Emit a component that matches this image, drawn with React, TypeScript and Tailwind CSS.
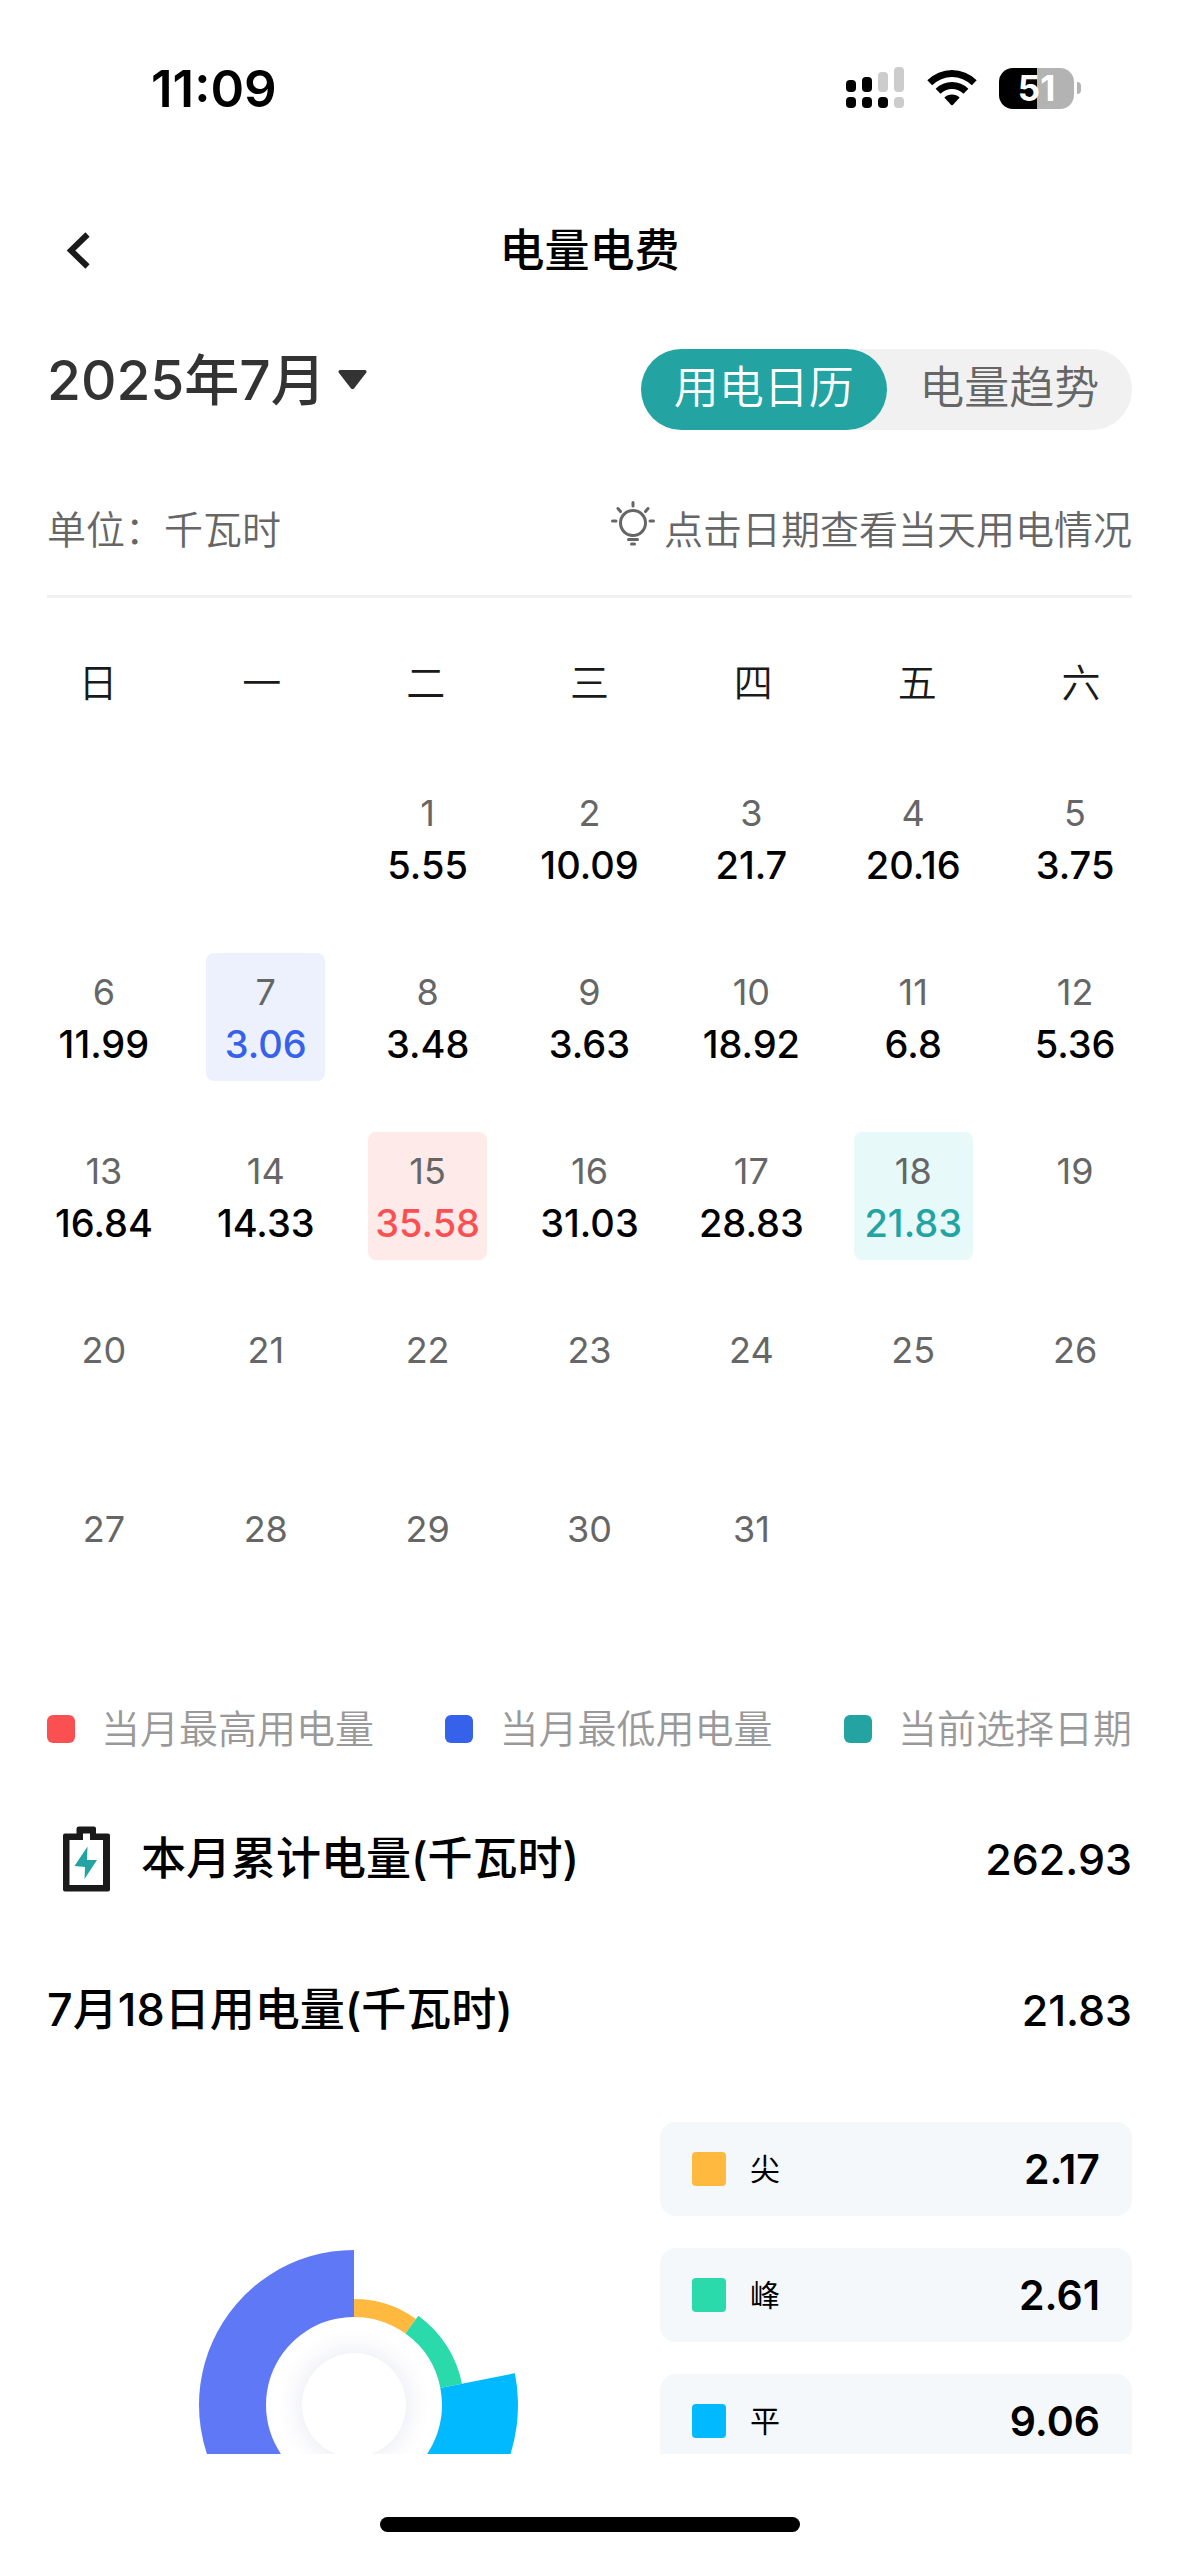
import { useState } from "react";
import clsx from "clsx";

const WEEKDAYS = ["日", "一", "二", "三", "四", "五", "六"];

// July 2025 starts on a Tuesday
const FIRST_WEEKDAY = 2;
const DAYS_IN_MONTH = 31;

const USAGE = [
  "5.55", "10.09", "21.7", "20.16", "3.75",
  "11.99", "3.06", "3.48", "3.63", "18.92", "6.8", "5.36",
  "16.84", "14.33", "35.58", "31.03", "28.83", "21.83",
];

const HIGHEST_DAY = 15;
const LOWEST_DAY = 7;

const LEGEND = [
  { label: "当月最高用电量", dot: "bg-[#fb5052]" },
  { label: "当月最低用电量", dot: "bg-[#3661ea]" },
  { label: "当前选择日期", dot: "bg-[#23a4a2]" },
];

const PERIODS = [
  { label: "尖", value: "2.17", dot: "bg-[#ffb93f]" },
  { label: "峰", value: "2.61", dot: "bg-[#2adaab]" },
  { label: "平", value: "9.06", dot: "bg-[#00b9ff]" },
];

const SLICES = [
  { value: 2.17, outer: 106, color: "#ffb93f" },
  { value: 2.61, outer: 110, color: "#2adaab" },
  { value: 9.06, outer: 164, color: "#00b9ff" },
  { value: 7.99, outer: 155, color: "#5f79f6" },
];

function StatusBar() {
  return (
    <div className="flex h-[176px] shrink-0 items-center justify-between pr-[98px] pl-[151px]">
      <span className="text-[51px] leading-none font-semibold">11:09</span>
      <div className="flex items-center gap-[22px]">
        <svg width="59" height="42" viewBox="0 0 59 42" aria-hidden="true">
          <rect x="0" y="13" width="10" height="12" rx="4" />
          <rect x="16" y="10" width="10" height="15" rx="4" />
          <rect x="32" y="5" width="10" height="20" rx="4" fill="#ccc" />
          <rect x="48" y="0" width="10" height="25" rx="4" fill="#ccc" />
          <rect x="0" y="30" width="10" height="11" rx="4" />
          <rect x="16" y="30" width="10" height="11" rx="4" />
          <rect x="32" y="30" width="10" height="11" rx="4" />
          <rect x="48" y="30" width="10" height="11" rx="4" fill="#ccc" />
        </svg>
        <svg width="50" height="38" viewBox="0 0 50 38" aria-hidden="true">
          <path d="M0.3 11.2A35 35 0 0 1 49.7 11.2L44.8 16.2A28 28 0 0 0 5.2 16.2Z" />
          <path d="M8.6 19.8A23.3 23.3 0 0 1 41.4 19.8L36.5 24.8A16.3 16.3 0 0 0 13.5 24.8Z" />
          <path d="M17.3 28.6A11 11 0 0 1 32.7 28.6L25.8 35.9Q25 36.7 24.2 35.9Z" />
        </svg>
        <div className="flex items-center gap-[3px]">
          <span className="flex h-[41px] w-[75px] items-center justify-center rounded-[14px] bg-linear-to-r from-black from-51% to-[#b3b3b3] to-51% text-[35px] leading-none font-bold text-white">
            51
          </span>
          <span className="h-3 w-1 rounded-r-full bg-[#b3b3b3]" />
        </div>
      </div>
    </div>
  );
}

function NavBar() {
  return (
    <header className="grid h-[148px] shrink-0 grid-cols-3 items-center px-[47px]">
      <button type="button" aria-label="返回" className="justify-self-start p-4">
        <svg width="30" height="40" viewBox="0 0 30 40" fill="none" stroke="#1a1a1a" strokeWidth="6">
          <path d="M24.5 4.5L8 20.5L24.5 36.5" />
        </svg>
      </button>
      <h1 className="text-center text-[45px] leading-none font-medium">电量电费</h1>
    </header>
  );
}

function ViewTabs() {
  const [tab, setTab] = useState("用电日历");
  return (
    <div className="grid h-[81px] w-[491px] grid-cols-2 rounded-full bg-[#f1f1f1]">
      {["用电日历", "电量趋势"].map((name) => (
        <button
          key={name}
          type="button"
          onClick={() => setTab(name)}
          className={clsx(
            "rounded-full pb-1 text-[45px] leading-none font-[350]",
            tab === name ? "bg-[#23a4a2] text-white" : "text-[#666]"
          )}
        >
          {name}
        </button>
      ))}
    </div>
  );
}

function BulbIcon() {
  return (
    <svg width="46" height="46" viewBox="0 0 46 46" fill="none" stroke="#666" strokeWidth="3" strokeLinecap="round" aria-hidden="true">
      <ellipse cx="23" cy="23" rx="12.5" ry="12.5" />
      <path d="M23 2.5V6M2.5 21H6M40 21H43.5M8 8.5L10.5 11.5M38 8.5L35.5 11.5M18.5 39.5H27.5M21.5 44H24.5" />
    </svg>
  );
}

function BatteryIcon() {
  return (
    <svg width="47" height="66" viewBox="0 0 47 66" aria-hidden="true">
      <path
        fillRule="evenodd"
        fill="#1a1a1a"
        d="M16 0.5H31Q33 0.5 33 2.5V7.5H45Q47 7.5 47 9.5V63.5Q47 65.5 45 65.5H2Q0 65.5 0 63.5V9.5Q0 7.5 2 7.5H13.5V2.5Q13.5 0.5 16 0.5ZM6.5 14V59H40V14H27V7.5H20V14Z"
      />
      <path fill="#23a4a2" d="M24.5 20.5L24 34H34L21.5 53L22 41L11.5 40Z" />
    </svg>
  );
}

function Calendar() {
  const [selected, setSelected] = useState(18);
  const days = Array.from({ length: DAYS_IN_MONTH }, (_, i) => i + 1);

  return (
    <section>
      <div className="mt-[57px] grid grid-cols-7 px-4 text-center text-[39px] leading-[56px] font-[350] text-[#1a1a1a]">
        {WEEKDAYS.map((w) => (
          <span key={w}>{w}</span>
        ))}
      </div>
      <div className="mt-[63px] grid grid-cols-7 justify-items-center gap-y-[51px] px-[23px]">
        {Array.from({ length: FIRST_WEEKDAY }, (_, i) => (
          <span key={`blank-${i}`} />
        ))}
        {days.map((day) => (
          <button
            key={day}
            type="button"
            onClick={() => setSelected(day)}
            className={clsx(
              "flex h-32 w-[119px] flex-col items-center rounded-lg pt-[13px] leading-[52px]",
              day === selected && "bg-[#e8f9fa] text-[#23a4a2]",
              day !== selected && day === HIGHEST_DAY && "bg-[#ffeaea] text-[#fb5052]",
              day !== selected && day === LOWEST_DAY && "bg-[#edf1fe] text-[#3661ea]"
            )}
          >
            <span className="text-[36px] text-[#666]">{day}</span>
            <span className="text-[38px] font-medium">{USAGE[day - 1]}</span>
          </button>
        ))}
      </div>
    </section>
  );
}

function polar(r: number, angle: number) {
  return `${r * Math.sin(angle)} ${-r * Math.cos(angle)}`;
}

function UsageChart() {
  const inner = 88;
  const total = SLICES.reduce((sum, s) => sum + s.value, 0);
  let start = 0;

  return (
    <svg width="340" height="340" viewBox="-170 -170 340 340" role="img" aria-label="用电量">
      <defs>
        <radialGradient id="halo">
          <stop offset="0.68" stopColor="#f3f4f8" />
          <stop offset="0.84" stopColor="#fbfbfd" />
          <stop offset="1" stopColor="#fff" />
        </radialGradient>
      </defs>
      {SLICES.map((s) => {
        const from = start;
        const to = start + (s.value / total) * Math.PI * 2;
        const large = to - from > Math.PI ? 1 : 0;
        start = to;
        return (
          <path
            key={s.color}
            fill={s.color}
            d={`M${polar(s.outer, from)}A${s.outer} ${s.outer} 0 ${large} 1 ${polar(s.outer, to)}L${polar(inner, to)}A${inner} ${inner} 0 ${large} 0 ${polar(inner, from)}Z`}
          />
        );
      })}
      <circle r="76" fill="url(#halo)" />
      <circle r="52" fill="#fff" />
    </svg>
  );
}

export default function App() {
  return (
    <div className="flex h-dvh flex-col bg-white font-['Inter','Noto_Sans_CJK_SC',sans-serif] text-black">
      <StatusBar />
      <NavBar />

      <main className="min-h-0 flex-1 overflow-y-auto [scrollbar-width:none]">
        <div className="mx-[47px] mt-[25px] flex items-start justify-between">
          <button type="button" className="flex items-center gap-3 text-[55px] leading-[62px] font-medium text-[#333]">
            2025年7月
            <svg width="29" height="20" viewBox="0 0 29 20" fill="#333" aria-hidden="true">
              <path d="M2 0H27Q29.5 0.5 28 3L16 18.5Q14.5 20 13 18.5L1 3Q-0.5 0.5 2 0Z" />
            </svg>
          </button>
          <ViewTabs />
        </div>

        <div className="mx-[47px] mt-[70px] flex justify-between border-b-3 border-[#f1f1f1] pb-[35px] text-[39px] leading-[60px] font-[350] text-[#666]">
          <span>单位：千瓦时</span>
          <span className="flex gap-2">
            <BulbIcon />
            点击日期查看当天用电情况
          </span>
        </div>

        <Calendar />

        <ul className="mx-[47px] mt-[82px] flex justify-between text-[39px] leading-[58px] font-[350] text-[#999]">
          {LEGEND.map((item) => (
            <li key={item.label} className="flex items-center gap-[26px]">
              <span className={clsx("size-7 rounded-md", item.dot)} />
              {item.label}
            </li>
          ))}
        </ul>

        <div className="mx-[47px] mt-[68px] flex items-center justify-between text-[45px] leading-[66px] font-medium">
          <span className="flex items-center gap-[31px] pl-4">
            <BatteryIcon />
            本月累计电量(千瓦时)
          </span>
          <span className="text-[43px]">262.93</span>
        </div>

        <div className="mx-[47px] mt-[85px] flex items-center justify-between text-[45px] leading-[66px] font-medium">
          <span>7月18日用电量(千瓦时)</span>
          <span className="text-[43px]">21.83</span>
        </div>

        <section className="mx-[47px] mt-[79px] flex">
          <div className="flex flex-1 justify-center pt-[113px]">
            <UsageChart />
          </div>
          <ul className="flex w-[472px] flex-col gap-8">
            {PERIODS.map((p) => (
              <li key={p.label} className="flex h-[94px] items-center rounded-2xl bg-[#f4f8fb] px-8">
                <span className={clsx("size-[34px] rounded", p.dot)} />
                <span className="ml-6 text-[30px] leading-none">{p.label}</span>
                <span className="ml-auto text-[41px] leading-none font-semibold">{p.value}</span>
              </li>
            ))}
          </ul>
        </section>
      </main>

      <footer className="flex h-[102px] shrink-0 items-end justify-center pb-6">
        <span className="h-[15px] w-[420px] rounded-full bg-black" />
      </footer>
    </div>
  );
}
